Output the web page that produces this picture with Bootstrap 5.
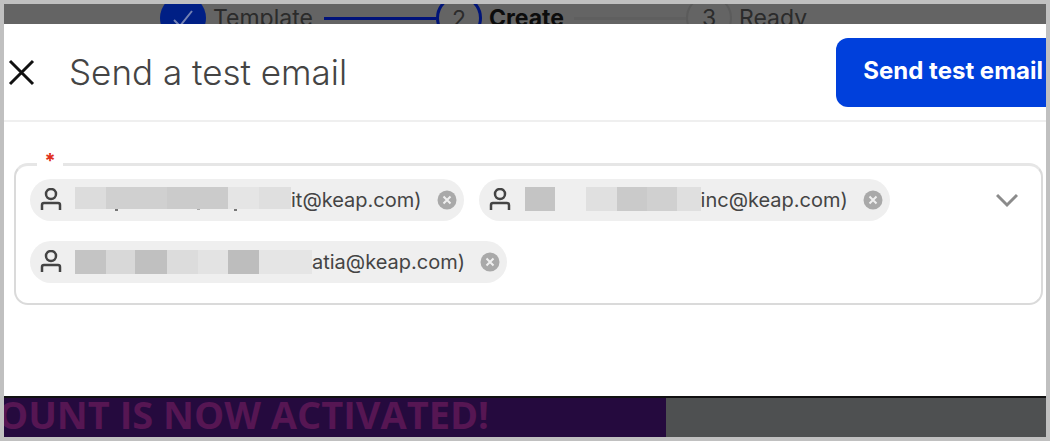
<!DOCTYPE html>
<html lang="en">
<head>
<meta charset="utf-8">
<meta name="viewport" content="width=device-width, initial-scale=1">
<title>Send a test email</title>
<link href="https://cdn.jsdelivr.net/npm/bootstrap@5.3.0/dist/css/bootstrap.min.css" rel="stylesheet">
<style>
  body { font-family: Inter, "Open Sans", sans-serif; background: #c0c0c0; }
  .frame { border: 4px solid #c0c0c0; background: #fff; }

  /* dimmed page above the dialog */
  .backdrop-top { height: 20px; background: #646464; color: #2b2b2b; padding-left: 156px; }
  .steps { gap: 7px; height: 46px; margin-top: -9px; font-size: 23px; line-height: 50px; }
  .dot { width: 46px; height: 46px; border: 3px solid transparent; border-radius: 50%; line-height: 42px; text-align: center; }
  .dot-done { background: #001f85; }
  .dot-now { border-color: #001478; }
  .dot-next { border: 2px solid #5b5b5b; }
  .track { width: 112px; height: 3px; background: #00127a; margin-right: -7px; }
  .track-next { background: #5f5f5f; }
  .name-1 { width: 104px; }
  .name-2 { width: 78px; color: #0c0c0c; }

  /* dialog */
  .dialog-head { height: 98px; border-bottom: 2px solid #efefef; }
  .icon-btn { background: none; border: 0; padding: 0; display: flex; color: inherit; }
  .title { font-size: 35px; line-height: 44px; color: #444; font-weight: 300; margin-left: 34px; }
  .send { height: 69px; border-radius: 12px 0 0 12px; background: #0040dc; color: #fff; font-size: 24px; font-weight: 700; padding: 0 3px 2px 27px; border: 0; }
  .dialog-body { padding: 41px 3px 91px 10px; }
  .picker { border: 2px solid #dadada; border-top: 3px solid #e6e6e6; border-radius: 14px; padding: 13px 23px 20px 14px; }
  .required { left: 21px; top: -16px; width: 26px; height: 24px; background: #fff; color: #e0301c; font-size: 20px; line-height: 22px; text-align: center; font-weight: 700; }
  .chips { gap: 20px 15px; }
  .chip { height: 42px; border-radius: 21px; background: #efefef; color: #444; font-size: 20px; line-height: 40px; padding: 0 7px 0 10px; }
  .chip .masked { margin-left: 13px; }
  .chip .icon-btn { margin-left: 15px; }
  .toggle { color: #8b8b8b; margin-top: 9px; }

  /* dimmed page below the dialog */
  .backdrop-bottom { height: 41px; background: #4e5051; border-top: 2px solid #111; }
  .banner { width: 662px; background: #250a3e; color: #561653; font: 700 38px/32px "Open Sans", sans-serif; padding-right: 177px; }
</style>
</head>
<body>
<div class="frame overflow-hidden">
  <div class="backdrop-top overflow-hidden">
    <div class="steps d-flex align-items-center">
      <span class="dot dot-done flex-shrink-0 d-flex align-items-center justify-content-center">
        <svg width="26" height="22" viewBox="0 0 26 22" fill="none" stroke="#7583b3" stroke-width="2"><path d="M4 13l6 6L22 4"/></svg>
      </span>
      <span class="name-1">Template</span>
      <span class="track flex-shrink-0"></span>
      <span class="dot dot-now flex-shrink-0">2</span>
      <span class="name-2 fw-bold">Create</span>
      <span class="track track-next flex-shrink-0"></span>
      <span class="dot dot-next flex-shrink-0">3</span>
      <span>Ready</span>
    </div>
  </div>

  <main>
    <header class="dialog-head d-flex align-items-center">
      <button class="icon-btn ms-1" type="button" aria-label="Close">
        <svg width="27" height="27" viewBox="0 0 27 27" fill="none" stroke="#111" stroke-width="3"><path d="M2 2l23 23M25 2L2 25"/></svg>
      </button>
      <h1 class="title mb-0">Send a test email</h1>
      <button class="send ms-auto text-nowrap" type="button">Send test email</button>
    </header>

    <section class="dialog-body">
      <div class="picker position-relative d-flex align-items-start justify-content-between" role="group" aria-label="Recipients">
        <span class="required position-absolute">*</span>
        <div class="chips d-flex flex-wrap">
          <div class="chip d-flex align-items-center">
            <svg width="22" height="24" viewBox="0 0 22 24" fill="none" stroke="#444" stroke-width="2.500"><circle cx="11" cy="6" r="5"/><path d="M2 22v-5q0-2 2-2h14q2 0 2 2v5"/></svg>
            <svg class="masked" width="216" height="28" viewBox="0 0 216 28"><path fill="#dcdcdc" d="M0 1h31v22H0z"/><path fill="#d0d0d0" d="M31 1h61v22H31z"/><path fill="#cbcbcb" d="M92 1h61v22H92z"/><path fill="#e5e5e5" d="M153 1h31v22h-31z"/><path fill="#dfdfdf" d="M184 1h32v22h-32z"/><path fill="#777" d="M40 23h3v2h-3zM159 23h3v2h-3z"/><path fill="#aaa" d="M122 23h3v1h-3z"/></svg>
            <span>it@keap.com)</span>
            <button class="icon-btn" type="button" aria-label="Remove first recipient">
              <svg width="20" height="20" viewBox="0 0 20 20"><circle cx="10" cy="10" r="9.500" fill="#a9a9a9"/><path d="M6.500 6.500l7 7M13.500 6.500l-7 7" stroke="#efefef" stroke-width="2"/></svg>
            </button>
          </div>
          <div class="chip d-flex align-items-center">
            <svg width="22" height="24" viewBox="0 0 22 24" fill="none" stroke="#444" stroke-width="2.500"><circle cx="11" cy="6" r="5"/><path d="M2 22v-5q0-2 2-2h14q2 0 2 2v5"/></svg>
            <svg class="masked" width="177" height="28" viewBox="0 0 177 28"><path fill="#c4c4c4" d="M1 1h30v24H1z"/><path fill="#e0e0e0" d="M62 1h31v24H62z"/><path fill="#cacaca" d="M93 1h30v24H93z"/><path fill="#d0d0d0" d="M123 1h30v24h-30z"/><path fill="#dfdfdf" d="M153 1h24v24h-24z"/></svg>
            <span>inc@keap.com)</span>
            <button class="icon-btn" type="button" aria-label="Remove second recipient">
              <svg width="20" height="20" viewBox="0 0 20 20"><circle cx="10" cy="10" r="9.500" fill="#a9a9a9"/><path d="M6.500 6.500l7 7M13.500 6.500l-7 7" stroke="#efefef" stroke-width="2"/></svg>
            </button>
          </div>
          <div class="chip d-flex align-items-center">
            <svg width="22" height="24" viewBox="0 0 22 24" fill="none" stroke="#444" stroke-width="2.500"><circle cx="11" cy="6" r="5"/><path d="M2 22v-5q0-2 2-2h14q2 0 2 2v5"/></svg>
            <svg class="masked" width="237" height="28" viewBox="0 0 237 28"><path fill="#c4c4c4" d="M0 2h31v24H0z"/><path fill="#d8d8d8" d="M31 2h29v24H31z"/><path fill="#c0c0c0" d="M60 2h32v24H60z"/><path fill="#dcdcdc" d="M92 2h31v24H92z"/><path fill="#e3e3e3" d="M123 2h30v24h-30z"/><path fill="#bdbdbd" d="M153 2h31v24h-31z"/><path fill="#e5e5e5" d="M184 2h53v24h-53z"/></svg>
            <span>atia@keap.com)</span>
            <button class="icon-btn" type="button" aria-label="Remove third recipient">
              <svg width="20" height="20" viewBox="0 0 20 20"><circle cx="10" cy="10" r="9.500" fill="#a9a9a9"/><path d="M6.500 6.500l7 7M13.500 6.500l-7 7" stroke="#efefef" stroke-width="2"/></svg>
            </button>
          </div>
        </div>
        <button class="icon-btn toggle" type="button" aria-label="Show contacts">
          <svg width="22" height="24" viewBox="0 0 22 24" fill="none" stroke="currentColor" stroke-width="3"><path d="M1 7l10 10L21 7"/></svg>
        </button>
      </div>
    </section>
  </main>

  <div class="backdrop-bottom d-flex overflow-hidden">
    <div class="banner d-flex justify-content-end text-nowrap overflow-hidden">OUNT IS NOW ACTIVATED!</div>
  </div>
</div>
<script src="https://cdn.jsdelivr.net/npm/bootstrap@5.3.0/dist/js/bootstrap.bundle.min.js"></script>
</body>
</html>
